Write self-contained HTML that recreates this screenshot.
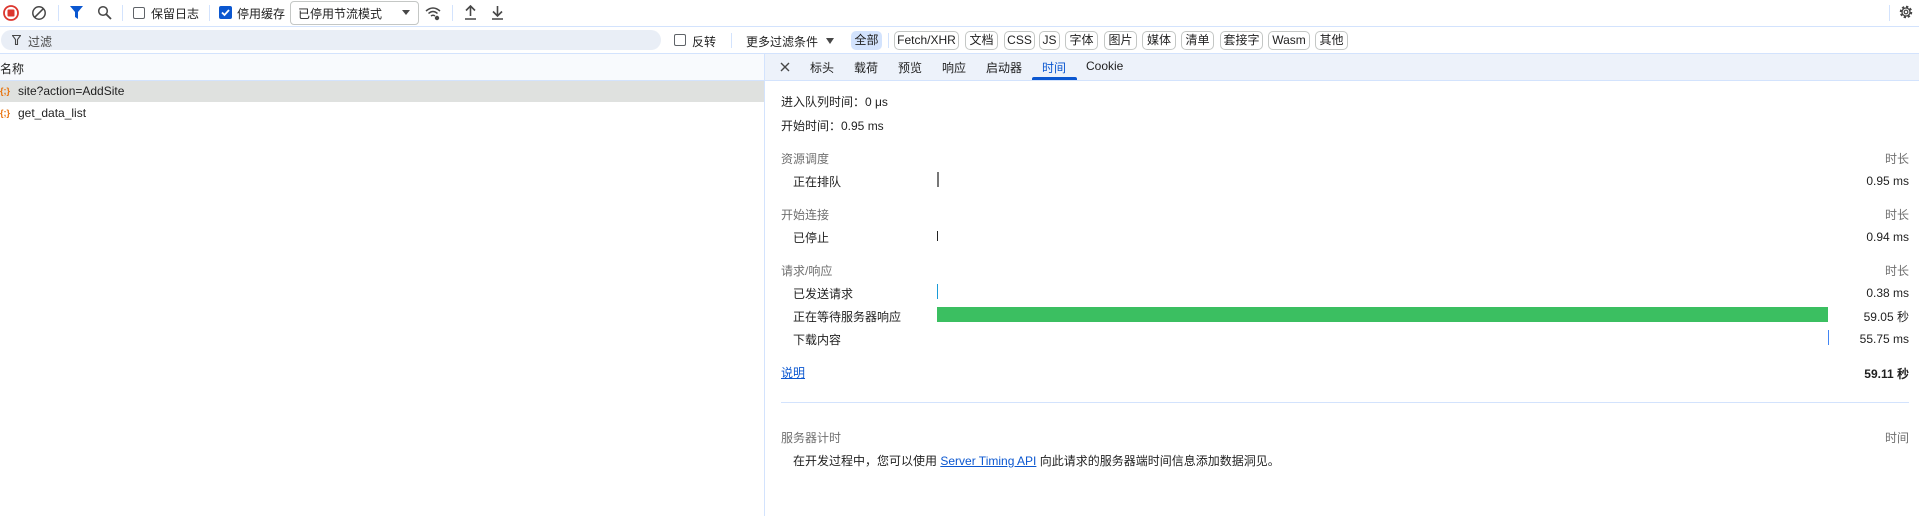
<!DOCTYPE html>
<html><head><meta charset="utf-8"><style>
*{margin:0;padding:0;box-sizing:border-box}
body{width:1919px;height:516px;background:#fff;font-family:"Liberation Sans","Noto Sans CJK SC",sans-serif;font-size:12px;color:#1f1f1f;position:relative;overflow:hidden}
.a{position:absolute;white-space:nowrap}
.hl{position:absolute;height:1px;background:#d3e3fd}
.vs{position:absolute;width:1px;background:#d3e3fd}
.cb{position:absolute;width:12px;height:12px;border:1px solid #5f6368;border-radius:2px;background:#fff}
.cbk{position:absolute;width:13px;height:13px;border-radius:2px;background:#0b57d0}
.chip{position:absolute;top:31px;height:19px;border:1px solid #c4c7c5;border-radius:5px;line-height:17px;text-align:center;font-size:12px}
.g{color:#6f6f6f}
.r{text-align:right;right:10px}
.lnk{color:#0b57d0;text-decoration:underline}
.ic{color:#e8710a;font-size:9px;font-weight:bold}
</style></head><body>
<svg class="a" style="left:2px;top:4px" width="18" height="18" viewBox="0 0 18 18"><circle cx="9" cy="9" r="7" fill="none" stroke="#dc362e" stroke-width="1.8"/><rect x="5.5" y="5.5" width="7" height="7" rx="1" fill="#dc362e"/></svg>
<svg class="a" style="left:31px;top:5px" width="16" height="16" viewBox="0 0 16 16"><circle cx="8" cy="8" r="6.2" fill="none" stroke="#474747" stroke-width="1.5"/><line x1="3.8" y1="12.2" x2="12.2" y2="3.8" stroke="#474747" stroke-width="1.5"/></svg>
<div class="vs" style="left:58px;top:5px;height:16px"></div>
<svg class="a" style="left:70px;top:6px" width="13" height="14" viewBox="0 0 13 14"><path d="M0 0H13L8 6V13L5 11V6Z" fill="#0b57d0"/></svg>
<svg class="a" style="left:97px;top:5px" width="15" height="15" viewBox="0 0 15 15"><circle cx="6" cy="6" r="4.3" fill="none" stroke="#474747" stroke-width="1.5"/><line x1="9" y1="9" x2="14" y2="14" stroke="#474747" stroke-width="1.8"/></svg>
<div class="vs" style="left:122px;top:5px;height:16px"></div>
<div class="cb" style="left:133px;top:7px"></div>
<div class="a" style="left:151px;top:5px">保留日志</div>
<div class="vs" style="left:209px;top:5px;height:16px"></div>
<div class="cbk" style="left:219px;top:6px"><svg width="13" height="13" viewBox="0 0 13 13"><path d="M3 6.5L5.5 9L10 4" fill="none" stroke="#fff" stroke-width="1.8"/></svg></div>
<div class="a" style="left:237px;top:5px">停用缓存</div>
<div class="a" style="left:290px;top:1px;width:129px;height:24px;border:1px solid #c4c7c5;border-radius:4px"></div>
<div class="a" style="left:298px;top:5px">已停用节流模式</div>
<svg class="a" style="left:402px;top:10px" width="8" height="5"><path d="M0 0H8L4 5Z" fill="#474747"/></svg>
<svg class="a" style="left:425px;top:5px" width="16" height="16" viewBox="0 0 16 16"><path d="M1 6Q8 0 15 6M3.5 8.5Q8 4.5 12.5 8.5M6 11Q8 9.5 10 11" fill="none" stroke="#474747" stroke-width="1.5"/><circle cx="12" cy="13" r="2.2" fill="#474747"/></svg>
<div class="vs" style="left:452px;top:5px;height:16px"></div>
<svg class="a" style="left:464px;top:5px" width="13" height="15" viewBox="0 0 13 15"><path d="M6.5 11V1M2 5.5L6.5 1L11 5.5M1 14H12" fill="none" stroke="#474747" stroke-width="1.6"/></svg>
<svg class="a" style="left:491px;top:5px" width="13" height="15" viewBox="0 0 13 15"><path d="M6.5 1V11M2 6.5L6.5 11L11 6.5M1 14H12" fill="none" stroke="#474747" stroke-width="1.6"/></svg>
<div class="vs" style="left:1889px;top:5px;height:16px"></div>
<svg class="a" style="left:1898px;top:4px" width="16" height="16" viewBox="0 0 16 16"><circle cx="8" cy="8" r="5" fill="none" stroke="#474747" stroke-width="2.5" stroke-dasharray="2.2 1.7"/><circle cx="8" cy="8" r="4" fill="none" stroke="#474747" stroke-width="1.3"/><circle cx="8" cy="8" r="1.8" fill="none" stroke="#474747" stroke-width="1.2"/></svg>
<div class="hl" style="left:0;top:26px;width:1919px"></div>
<div class="a" style="left:1px;top:30px;width:660px;height:20px;border-radius:10px;background:#e9eef6"></div>
<svg class="a" style="left:12px;top:35px" width="9" height="10" viewBox="0 0 9 10"><path d="M0.5 0.5H8.5L5.5 4.5V9.5H3.5V4.5Z" fill="none" stroke="#474747" stroke-width="1.1"/></svg>
<div class="a" style="left:28px;top:33px;color:#474747">过滤</div>
<div class="cb" style="left:674px;top:34px"></div>
<div class="a" style="left:692px;top:33px">反转</div>
<div class="vs" style="left:731px;top:33px;height:15px"></div>
<div class="a" style="left:746px;top:33px">更多过滤条件</div>
<svg class="a" style="left:826px;top:38px" width="8" height="6"><path d="M0 0H8L4 6Z" fill="#474747"/></svg>
<div class="chip" style="left:851px;width:31px;background:#d3e3fd;border-color:#d3e3fd">全部</div>
<div class="vs" style="left:888px;top:33px;height:15px"></div>
<div class="chip" style="left:894px;width:65px">Fetch/XHR</div>
<div class="chip" style="left:965px;width:33px">文档</div>
<div class="chip" style="left:1004px;width:31px">CSS</div>
<div class="chip" style="left:1039px;width:21px">JS</div>
<div class="chip" style="left:1065px;width:33px">字体</div>
<div class="chip" style="left:1104px;width:33px">图片</div>
<div class="chip" style="left:1142px;width:34px">媒体</div>
<div class="chip" style="left:1181px;width:33px">清单</div>
<div class="chip" style="left:1220px;width:43px">套接字</div>
<div class="chip" style="left:1268px;width:42px">Wasm</div>
<div class="chip" style="left:1315px;width:33px">其他</div>
<div class="hl" style="left:0;top:53px;width:1919px"></div>
<div class="a" style="left:0;top:54px;width:764px;height:26px;background:#f8fafd"></div>
<div class="a" style="left:0;top:60px">名称</div>
<div class="hl" style="left:0;top:80px;width:764px"></div>
<div class="a" style="left:0;top:81px;width:764px;height:21px;background:#dfe1df"></div>
<div class="a ic" style="left:0;top:86px">{;}</div>
<div class="a" style="left:18px;top:84px">site?action=AddSite</div>
<div class="a ic" style="left:0;top:108px">{;}</div>
<div class="a" style="left:18px;top:106px">get_data_list</div>
<div class="vs" style="left:764px;top:54px;height:462px"></div>
<div class="a" style="left:765px;top:54px;width:1154px;height:26px;background:#edf2fa"></div>
<div class="hl" style="left:765px;top:80px;width:1154px"></div>
<svg class="a" style="left:780px;top:62px" width="10" height="10"><path d="M1 1L9 9M9 1L1 9" stroke="#474747" stroke-width="1.4"/></svg>
<div class="a" style="left:810px;top:59px">标头</div>
<div class="a" style="left:854px;top:59px">载荷</div>
<div class="a" style="left:898px;top:59px">预览</div>
<div class="a" style="left:942px;top:59px">响应</div>
<div class="a" style="left:986px;top:59px">启动器</div>
<div class="a" style="left:1042px;top:59px;color:#0b57d0">时间</div>
<div class="a" style="left:1032px;top:77px;width:45px;height:3px;background:#0b57d0;border-radius:2px 2px 0 0"></div>
<div class="a" style="left:1086px;top:59px">Cookie</div>
<div class="a" style="left:781px;top:93px">进入队列时间：0 μs</div>
<div class="a" style="left:781px;top:117px">开始时间：0.95 ms</div>
<div class="a g" style="left:781px;top:150px">资源调度</div>
<div class="a g r" style="top:150px">时长</div>
<div class="a" style="left:793px;top:173px">正在排队</div>
<div class="a" style="left:937px;top:172px;width:2px;height:15px;background:#777"></div>
<div class="a r" style="top:174px">0.95 ms</div>
<div class="a g" style="left:781px;top:206px">开始连接</div>
<div class="a g r" style="top:206px">时长</div>
<div class="a" style="left:793px;top:229px">已停止</div>
<div class="a" style="left:937px;top:231px;width:1px;height:10px;background:#222"></div>
<div class="a r" style="top:230px">0.94 ms</div>
<div class="a g" style="left:781px;top:262px">请求/响应</div>
<div class="a g r" style="top:262px">时长</div>
<div class="a" style="left:793px;top:285px">已发送请求</div>
<div class="a" style="left:937px;top:284px;width:1px;height:15px;background:#1a9bd7"></div>
<div class="a r" style="top:286px">0.38 ms</div>
<div class="a" style="left:793px;top:308px">正在等待服务器响应</div>
<div class="a" style="left:937px;top:307px;width:891px;height:15px;background:#3bbf61"></div>
<div class="a r" style="top:308px">59.05 秒</div>
<div class="a" style="left:793px;top:331px">下载内容</div>
<div class="a" style="left:1828px;top:330px;width:1px;height:15px;background:#4285f4"></div>
<div class="a r" style="top:332px">55.75 ms</div>
<div class="a lnk" style="left:781px;top:364px">说明</div>
<div class="a r" style="top:365px;font-weight:bold">59.11 秒</div>
<div class="hl" style="left:781px;top:402px;width:1128px"></div>
<div class="a g" style="left:781px;top:429px">服务器计时</div>
<div class="a g r" style="top:429px">时间</div>
<div class="a" style="left:793px;top:452px">在开发过程中，您可以使用 <span class="lnk">Server Timing API</span> 向此请求的服务器端时间信息添加数据洞见。</div>
</body></html>
